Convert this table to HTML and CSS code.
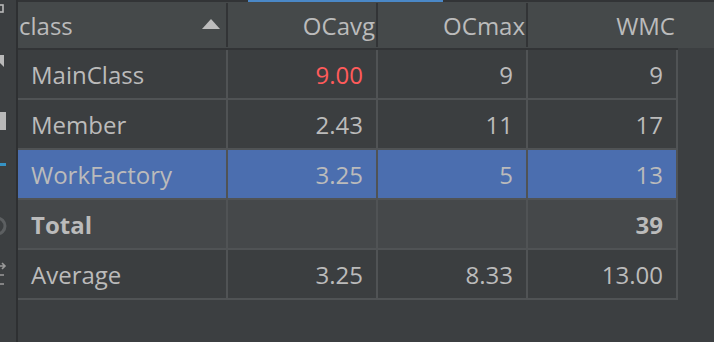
FILE: index.html
```html
<!DOCTYPE html>
<html>
<head>
<meta charset="utf-8">
<link rel="stylesheet" href="styles.css">
</head>
<body>
<div class="app">
  <aside class="sidebar">
    <svg class="sb-icons" width="16" height="342" viewBox="0 0 16 342">
      <rect x="-4" y="5" width="7" height="7" fill="none" stroke="#b9b9b9" stroke-width="1.6"/>
      <polygon points="-3,55 4,55 4,67 -3,60" fill="#b9b9b9"/>
      <rect x="-2" y="112" width="8" height="18" fill="#b9b9b9"/>
      <rect x="0" y="163" width="6" height="3" fill="#3592c4"/>
      <circle cx="-3" cy="226" r="8" fill="none" stroke="#5c5f61" stroke-width="3"/>
      <path d="M-2 266 H4 M-2 275 H4 M-2 284 H4 M2 263 L5 266 L2 269" fill="none" stroke="#9a9a9a" stroke-width="1.6"/>
    </svg>
  </aside>
  <div class="divider"></div>
  <main class="main">
    <div class="topline"><div class="tab-accent"></div></div>
    <div class="header">
      <div class="hcell hcell-name">class<span class="sort"></span></div>
      <div class="hsep"></div>
      <div class="hcell num">OCavg</div>
      <div class="hsep"></div>
      <div class="hcell num">OCmax</div>
      <div class="hsep"></div>
      <div class="hcell num">WMC</div>
    </div>
    <div class="header-border"></div>
    <div class="grid">
      <div class="cell">MainClass</div><div class="cell num red">9.00</div><div class="cell num">9</div><div class="cell num">9</div>
      <div class="cell">Member</div><div class="cell num">2.43</div><div class="cell num">11</div><div class="cell num">17</div>
      <div class="cell sel">WorkFactory</div><div class="cell num sel">3.25</div><div class="cell num sel">5</div><div class="cell num sel">13</div>
      <div class="cell tot">Total</div><div class="cell num tot"></div><div class="cell num tot"></div><div class="cell num tot">39</div>
      <div class="cell">Average</div><div class="cell num">3.25</div><div class="cell num">8.33</div><div class="cell num">13.00</div>
    </div>
  </main>
</div>
</body>
</html>
```

FILE: styles.css
```css
* { box-sizing: border-box; }
html, body {
  margin: 0;
  padding: 0;
  width: 714px;
  height: 342px;
  overflow: hidden;
  background: #3c3f41;
  font-family: "Open Sans", "Noto Sans", sans-serif;
  color: #bbbbbb;
}
.app {
  display: flex;
  height: 342px;
}
.sidebar {
  width: 16px;
  flex: none;
  background: #3c3f41;
}
.sb-icons { display: block; }
.divider {
  width: 2px;
  flex: none;
  background: #2e3032;
}
.main {
  flex: 1;
  display: flex;
  flex-direction: column;
}
.topline {
  height: 2px;
  background: #323436;
  padding-left: 230px;
}
.tab-accent {
  width: 195px;
  height: 2px;
  background: #4a88c7;
}
.header {
  height: 46px;
  background: #45494a;
  display: flex;
  align-items: center;
  font-size: 24px;
}
.hcell {
  height: 46px;
  display: flex;
  align-items: center;
  padding-right: 1px;
  white-space: nowrap;
  overflow: hidden;
}
.hcell-name {
  width: 208px;
  padding-left: 1px;
  justify-content: space-between;
  padding-right: 6px;
}
.hcell.num {
  width: 148px;
  justify-content: flex-end;
}
.hsep {
  width: 2px;
  height: 44px;
  background: #323436;
  flex: none;
}
.sort {
  width: 0;
  height: 0;
  border-left: 9px solid transparent;
  border-right: 9px solid transparent;
  border-bottom: 10px solid #bdbdbd;
  margin-top: -3px;
}
.header-border {
  width: 660px;
  height: 2px;
  background: #323436;
}
.grid {
  display: grid;
  grid-template-columns: 208px 148px 148px 148px;
  grid-auto-rows: 48px;
  gap: 2px;
  padding: 0 2px 2px 0;
  background: #505355;
  width: 660px;
  font-size: 24px;
}
.cell {
  background: #3b3e40;
  display: flex;
  align-items: center;
  padding: 0 13px;
  white-space: nowrap;
}
.cell.num { justify-content: flex-end; }
.red { color: #ff5b5b; }
.sel { background: #4b6eaf; }
.tot { background: #45484a; font-weight: bold; }
```
